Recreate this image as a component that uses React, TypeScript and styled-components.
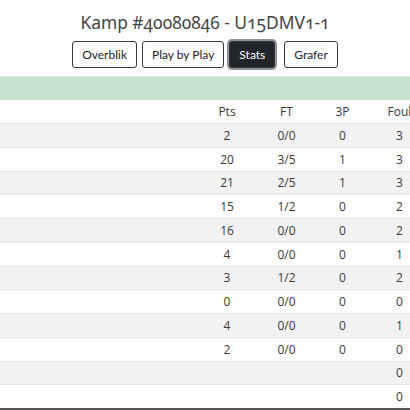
import styled, { createGlobalStyle } from "styled-components";

const GlobalStyle = createGlobalStyle`
  html, body {
    margin: 0;
    padding: 0;
    background: #fff;
    overflow: hidden;
  }
  body {
    font-family: "Open Sans", "Liberation Sans", sans-serif;
    color: #3a3a3a;
  }
`;

const Page = styled.div`
  width: 410px;
  overflow: hidden;
`;

const Header = styled.div`
  display: flex;
  flex-direction: column;
  align-items: center;
  padding-top: 10px;
`;

const Title = styled.h1`
  margin: 0;
  font-family: "Noto Sans", "Open Sans", sans-serif;
  font-variant-numeric: oldstyle-nums;
  font-weight: 400;
  font-size: 17.4px;
  line-height: 24px;
  color: #444;
`;

const Nav = styled.div`
  display: flex;
  gap: 5px;
  margin-top: 7px;
`;

const NavButton = styled.button<{ active?: boolean; spaced?: boolean }>`
  height: 27px;
  padding: 0 9px;
  font-family: Lato, "Open Sans", sans-serif;
  font-size: 12px;
  border: 1px solid #343a40;
  border-radius: 3px;
  background: ${(p) => (p.active ? "#212529" : "#fff")};
  color: ${(p) => (p.active ? "#fff" : "#212529")};
  box-shadow: ${(p) => (p.active ? "0 0 0 2px #8f9193" : "none")};
  margin-left: ${(p) => (p.spaced ? "4px" : "0")};
  cursor: pointer;
`;

const Bar = styled.div`
  margin-top: 8px;
  height: 23px;
  background: #c8e2d0;
  border-top: 1px solid #d6ebdc;
`;

const Row = styled.div<{ shaded?: boolean; head?: boolean }>`
  display: grid;
  grid-template-columns: 197px 60px 59px 53px 61px;
  width: 430px;
  height: ${(p) => (p.head ? "23px" : "23.75px")};
  box-sizing: border-box;
  border-top: ${(p) => (p.head ? "none" : "1px solid #e3e6e8")};
  background: ${(p) => (p.shaded ? "#f2f2f2" : "#fff")};
  font-size: 12px;
  align-items: center;
`;

const Cell = styled.div`
  text-align: center;
`;

const TableEnd = styled.div`
  height: 2px;
  background: #555;
`;

type Stat = { pts?: number; ft?: string; tp?: number; foul: number };

const stats: Stat[] = [
  { pts: 2, ft: "0/0", tp: 0, foul: 3 },
  { pts: 20, ft: "3/5", tp: 1, foul: 3 },
  { pts: 21, ft: "2/5", tp: 1, foul: 3 },
  { pts: 15, ft: "1/2", tp: 0, foul: 2 },
  { pts: 16, ft: "0/0", tp: 0, foul: 2 },
  { pts: 4, ft: "0/0", tp: 0, foul: 1 },
  { pts: 3, ft: "1/2", tp: 0, foul: 2 },
  { pts: 0, ft: "0/0", tp: 0, foul: 0 },
  { pts: 4, ft: "0/0", tp: 0, foul: 1 },
  { pts: 2, ft: "0/0", tp: 0, foul: 0 },
  { foul: 0 },
  { foul: 0 },
];

const App = () => {
  return (
    <Page>
      <GlobalStyle />
      <Header>
        <Title>Kamp #40080846 - U15DMV1-1</Title>
        <Nav>
          <NavButton>Overblik</NavButton>
          <NavButton>Play by Play</NavButton>
          <NavButton active>Stats</NavButton>
          <NavButton spaced>Grafer</NavButton>
        </Nav>
      </Header>
      <Bar />
      <Row head>
        <Cell />
        <Cell>Pts</Cell>
        <Cell>FT</Cell>
        <Cell>3P</Cell>
        <Cell>Foul</Cell>
      </Row>
      {stats.map((s, i) => (
        <Row key={i} shaded={i % 2 === 0}>
          <Cell />
          <Cell>{s.pts}</Cell>
          <Cell>{s.ft}</Cell>
          <Cell>{s.tp}</Cell>
          <Cell>{s.foul}</Cell>
        </Row>
      ))}
      <TableEnd />
    </Page>
  );
};

export default App;
